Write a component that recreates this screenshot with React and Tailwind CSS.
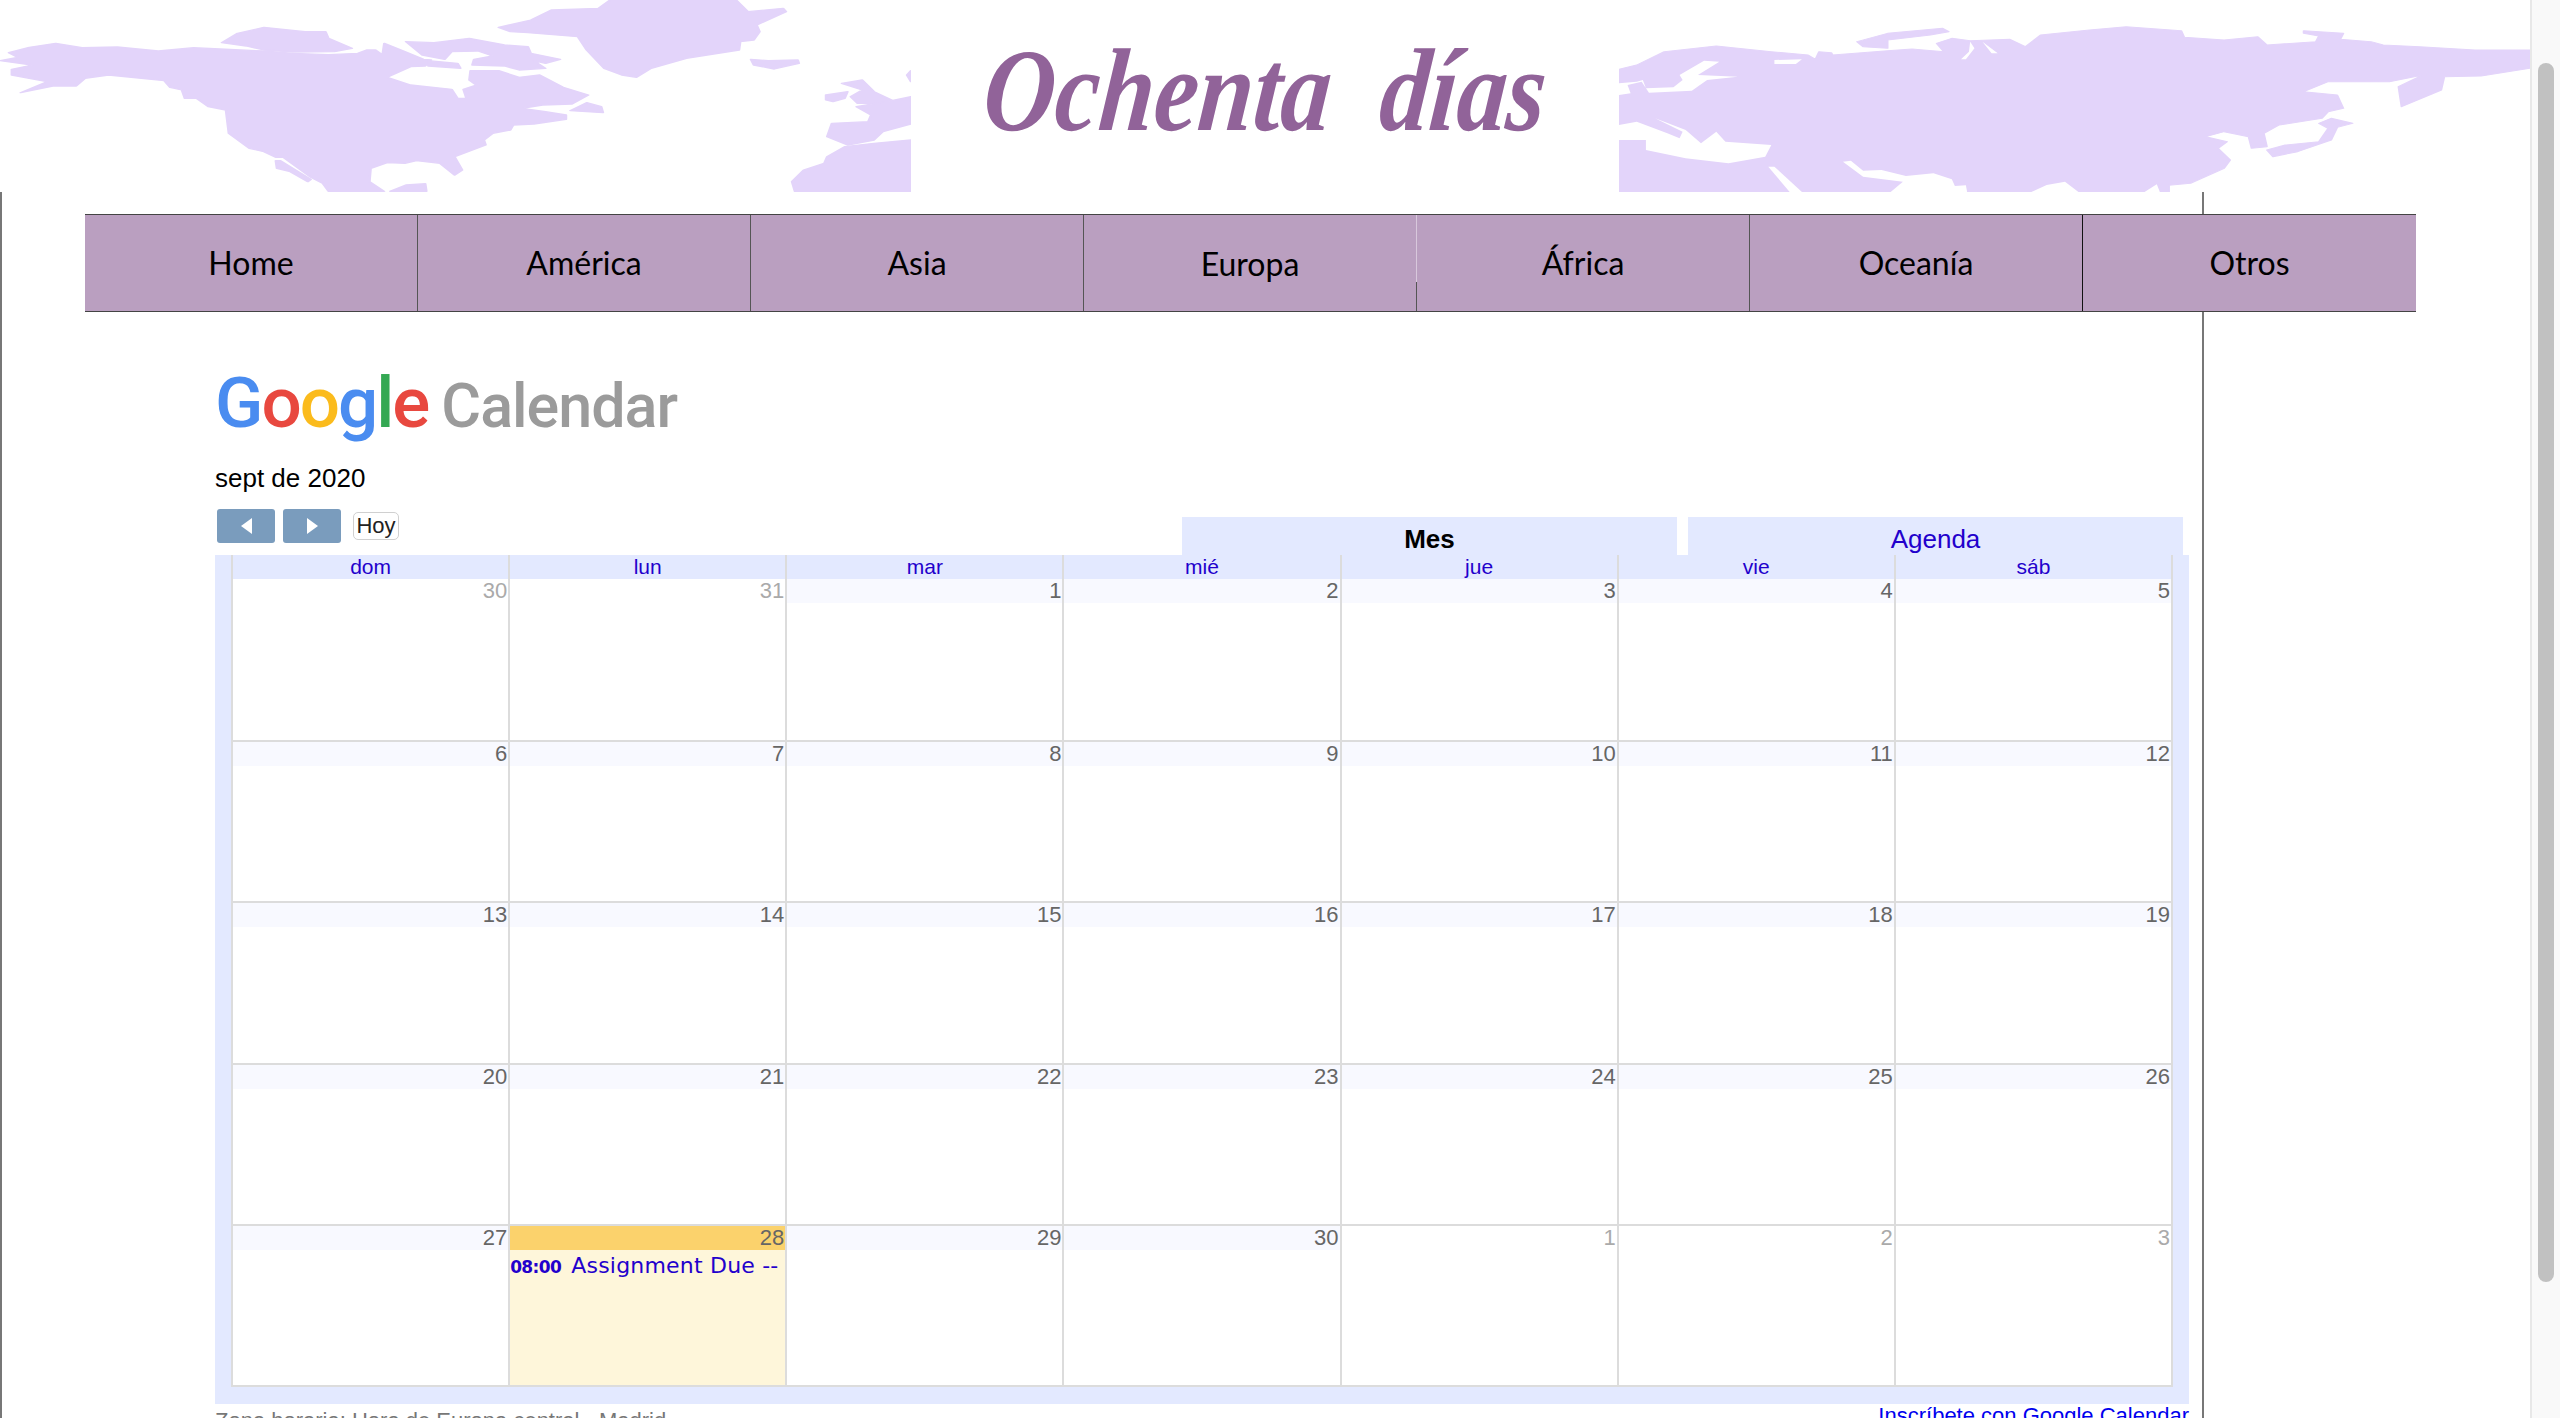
const navItems = ['Home', 'América', 'Asia', 'Europa', 'África', 'Oceanía', 'Otros'];
const weekDays = ['dom', 'lun', 'mar', 'mié', 'jue', 'vie', 'sáb'];
const weeks = [
  [30, 31, 1, 2, 3, 4, 5],
  [6, 7, 8, 9, 10, 11, 12],
  [13, 14, 15, 16, 17, 18, 19],
  [20, 21, 22, 23, 24, 25, 26],
  [27, 28, 29, 30, 1, 2, 3],
];

function AmericasMap() {
  return (
    <svg className="h-[192px] w-[911px] shrink-0" viewBox="0 0 1553 576" preserveAspectRatio="none">
      <g fill="#e3d4fa" stroke="#e3d4fa" strokeWidth="4" strokeLinejoin="round">
        <path d="M0 182L30 172L15 158L50 142L95 130L140 143L200 141L270 153L330 143L375 147L450 153L500 160L560 164L610 160L625 150L640 150L652 165L655 130L690 155L722 178L735 180L725 198L700 200L660 232L700 255L770 268L780 295L795 295L790 268L812 255L800 240L802 212L850 212L885 232L920 225L960 262L1003 285L975 312L925 315L890 325L930 335L965 345L965 358L910 372L875 375L870 390L840 400L825 420L828 435L775 470L788 510L775 525L750 490L710 482L690 490L660 488L632 505L630 545L655 574L560 574L550 550L530 532L483 472L470 472L450 455L425 445L390 400L385 330L355 320L335 295L315 295L310 270L290 262L280 242L185 225L145 235L130 258L90 258L35 278L80 245L50 235L20 225L20 208L55 195Z" />
        <path d="M470 482L472 505L495 515L525 545L530 538L478 482Z" />
        <path d="M665 574L692 555L725 551L727 574Z" />
        <path d="M378 128L405 100L450 82L520 95L555 95L560 115L600 145L570 155L500 156L450 150L420 138Z" />
        <path d="M692 125L740 128L800 115L860 135L900 140L905 160L955 178L930 190L910 182L930 205L885 210L860 198L805 195L808 178L840 168L815 153L770 155L758 178L720 165Z" />
        <path d="M730 182L780 190L785 205L730 198Z" />
        <path d="M850 82L905 60L940 30L1020 25L1040 0L1255 0L1275 35L1335 25L1340 35L1290 75L1295 95L1285 120L1262 125L1260 150L1170 175L1110 205L1085 232L1060 225L1030 205L1000 150L985 110L900 98L870 95Z" />
        <path d="M1280 178L1310 182L1360 180L1362 190L1320 207L1285 195Z" />
        <path d="M972 332L1000 308L1025 320L1028 338Z" />
        <path d="M1408 285L1445 275L1440 295L1420 305L1408 300Z" />
        <path d="M1435 250L1470 240L1490 275L1520 300L1500 310L1462 310L1450 290L1470 270Z" />
        <path d="M1553 212L1546 225L1553 245Z" />
        <path d="M1553 290L1520 302L1460 320L1485 345L1480 365L1418 370L1410 410L1445 435L1490 420L1505 395L1553 372Z" />
        <path d="M1553 420L1490 430L1440 440L1410 470L1405 490L1370 510L1350 545L1355 574L1553 574Z" />
      </g>
    </svg>
  );
}

function AsiaMap() {
  return (
    <svg className="h-[192px] w-[911px] shrink-0" viewBox="31 0 1489 576" preserveAspectRatio="none">
      <g fill="#e3d4fa" stroke="#e3d4fa" strokeWidth="3" strokeLinejoin="round">
        <path d="M31 208L60 195L105 155L190 138L280 155L340 165L352 178L358 155L378 158L380 165L470 152L510 147L562 155L550 130L575 115L605 122L670 118L695 140L720 105L800 90L860 80L950 92L955 112L1020 120L1075 110L1090 135L1170 125L1175 108L1150 100L1150 92L1215 100L1210 118L1260 125L1280 135L1340 140L1430 150L1520 150L1520 205L1440 228L1380 230L1375 270L1310 320L1305 260L1345 225L1290 245L1190 245L1150 275L1205 285L1215 325L1190 335L1180 355L1110 375L1085 400L1090 440L1065 445L1060 410L1020 395L990 410L1025 425L1010 445L1030 480L1020 505L965 550L930 556L930 576L31 576Z" />
        <path d="M420 125L470 100L560 85L570 95L540 105L470 120L470 145L430 140Z" />
        <path d="M1090 450L1120 435L1175 425L1190 385L1175 370L1195 355L1230 370L1205 382L1195 420L1140 455L1100 470Z" />
      </g>
      <g fill="#ffffff">
        <path d="M605 125L612 145L598 178L590 178L603 155Z" />
        <path d="M625 125L640 160L650 160L632 135Z" />
        <path d="M170 182L195 185L160 225L225 230L175 240L150 272L80 278L68 245L45 255L50 280L31 285L31 250L60 245L70 240L75 265L120 262L135 240L130 225Z" />
        <path d="M285 180L330 178L320 192L285 192Z" />
        <path d="M31 375L60 365L110 400L130 415L135 395L90 355L140 390L165 430L190 395L205 425L280 435L270 470L210 490L140 475L75 450L75 420L31 420Z" />
        <path d="M275 500L285 500L330 576L310 576Z" />
        <path d="M397 485L410 482L430 512L460 510L500 528L545 520L575 538L580 558L598 556L600 576L475 576L495 545L430 530Z" />
        <path d="M705 576L730 555L760 545L782 576Z" />
        <path d="M890 576L910 553L915 576Z" />
      </g>
    </svg>
  );
}

function SiteHeader() {
  return (
    <div className="flex h-[192px] w-[2530px] overflow-hidden">
      <AmericasMap />
      <div className="flex flex-1 items-start justify-center">
        <span className="mt-[21px] -skew-x-6 scale-x-[0.84] whitespace-pre font-['Liberation_Serif',serif] text-[118px] leading-[140px] font-bold italic text-[#916399]">
          Ochenta  días
        </span>
      </div>
      <AsiaMap />
    </div>
  );
}

function NavBar() {
  return (
    <div className="relative ml-[83px] flex h-[98px] w-[2331px] border-y border-[#444] bg-[#ba9fc0] font-['Lato',sans-serif] text-[32px] text-black">
      {navItems.map((item, i) => (
        <div
          key={item}
          className={
            i === 6
              ? 'flex w-[333px] items-center justify-center'
              : i === 5
                ? 'flex w-[333px] items-center justify-center border-r border-[#111]'
                : 'flex w-[333px] items-center justify-center border-r border-[#555]'
          }
        >
          <span className={item === 'Europa' ? 'mt-[2px]' : ''}>{item}</span>
        </div>
      ))}
      {/* light top part of the divider right of Europa */}
      <div className="absolute top-0 left-[1331px] h-[67px] w-px bg-[#d8c8dc]" />
    </div>
  );
}

function GoogleCalendarLogo() {
  return (
    <div className="ml-[213px] mt-[49px] flex h-[83px] items-baseline font-['Roboto',sans-serif] text-[71px] leading-[83px] font-medium tracking-[-2px]">
      <span className="text-[#4a8cf0]">G</span>
      <span className="text-[#e8483f]">o</span>
      <span className="text-[#fbbb1c]">o</span>
      <span className="text-[#4a8cf0]">g</span>
      <span className="text-[#34a853]">l</span>
      <span className="text-[#e8483f]">e</span>
      <span className="ml-[13px] text-[61px] tracking-[-1px] text-[#9b9b9b]">Calendar</span>
    </div>
  );
}

function Toolbar() {
  return (
    <div className="mt-[16px] flex h-[46px] w-[1974px] items-start justify-between pr-[6px]">
      <div className="flex items-start pl-[2px]">
        <button className="flex h-[34px] w-[58px] items-center justify-center rounded-[3px] bg-[#7a9cbd]">
          <svg width="11" height="16" viewBox="0 0 11 16"><path d="M11 0V16L0 8Z" fill="#fff" /></svg>
        </button>
        <button className="ml-[8px] flex h-[34px] w-[58px] items-center justify-center rounded-[3px] bg-[#7a9cbd]">
          <svg width="11" height="16" viewBox="0 0 11 16"><path d="M0 0V16L11 8Z" fill="#fff" /></svg>
        </button>
        <button className="ml-[12px] mt-[3px] flex h-[28px] w-[46px] items-center justify-center rounded-[5px] border border-[#d0d0d0] bg-white text-[22px] leading-none text-[#222]">
          Hoy
        </button>
      </div>
      <div className="mt-[8px] flex gap-[11px] text-[26px] leading-[38px]">
        <div className="h-[38px] w-[495px] bg-[#e3e9ff] pt-[3px] text-center font-bold text-black">Mes</div>
        <div className="h-[38px] w-[495px] bg-[#e3e9ff] pt-[3px] text-center text-[#2200cc]">Agenda</div>
      </div>
    </div>
  );
}

function DayCell({ day, week, col }) {
  const outside = (week === 0 && col < 2) || (week === 4 && col > 3);
  const today = week === 4 && col === 1;
  return (
    <div className={(week === 0 ? 'border-l-2' : 'border-l-2 border-t-2') + ' border-[#dcdcdc] ' + (today ? 'bg-[#fef6da]' : 'bg-white')}>
      <div className={'h-[24px] pr-[1px] text-right text-[22px] leading-[24px] ' + (today ? 'bg-[#fbd26c] text-[#666]' : outside ? 'text-[#aaa]' : 'bg-[#f8f9ff] text-[#666]')}>
        {day}
      </div>
      {today && (
        <div className="mt-[2px] flex items-baseline whitespace-nowrap font-['DejaVu_Sans',sans-serif] text-[#2200cc]">
          <span className="text-[17px] font-bold tracking-[-0.6px]">08:00</span>
          <span className="ml-[10px] text-[22px] leading-[28px] tracking-[0.2px]">Assignment Due --</span>
        </div>
      )}
    </div>
  );
}

function CalendarPanel() {
  return (
    <div className="w-[1974px] bg-[#e3e9ff] pb-[17px] pl-[16px]">
      <div className="w-[1942px]">
        <div className="grid h-[24px] grid-cols-7 border-r-2 border-[#dcdcdc] text-[21px] leading-[24px] text-[#2200cc]">
          {weekDays.map(d => (
            <div key={d} className="border-l-2 border-[#dcdcdc] text-center">{d}</div>
          ))}
        </div>
        <div className="grid h-[808px] grid-cols-7 grid-rows-5 border-r-2 border-b-2 border-[#dcdcdc]">
          {weeks.map((week, w) => week.map((day, c) => (
            <DayCell key={w + '-' + c} day={day} week={w} col={c} />
          )))}
        </div>
      </div>
    </div>
  );
}

export default function App() {
  return (
    <div className="flex h-[1418px] w-[2560px] overflow-hidden bg-white font-['Liberation_Sans',sans-serif]">
      <div className="w-[2530px] shrink-0">
        <SiteHeader />
        <div className="h-[1226px] w-[2204px] border-x-2 border-l-[#777] border-r-[#777] pt-[22px]">
          <NavBar />
          <GoogleCalendarLogo />
          <div className="ml-[213px]">
            <div className="mt-[19px] text-[26px] leading-[30px] text-black">sept de 2020</div>
            <Toolbar />
            <CalendarPanel />
            <div className="flex w-[1974px] items-start justify-between text-[22px] leading-[26px]">
              <span className="mt-[4px] text-[#777]">Zona horaria: Hora de Europa central - Madrid</span>
              <span className="-mt-[1px] text-[#0000ee]">Inscríbete con Google Calendar</span>
            </div>
          </div>
        </div>
      </div>
      {/* browser scrollbar */}
      <div className="h-full w-[30px] border-l-2 border-[#e8e8e8] bg-[#f9f9f9] pt-[63px] pl-[6px]">
        <div className="h-[1219px] w-[16px] rounded-full bg-[#c1c1c1]" />
      </div>
    </div>
  );
}
